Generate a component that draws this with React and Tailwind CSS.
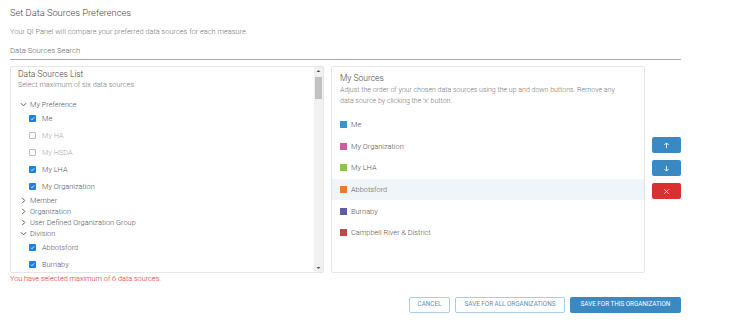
import React from "react";

const tree = [
  { type: "group", label: "My Preference", open: true },
  { type: "item", label: "Me", checked: true },
  { type: "item", label: "My HA", disabled: true },
  { type: "item", label: "My HSDA", disabled: true },
  { type: "item", label: "My LHA", checked: true },
  { type: "item", label: "My Organization", checked: true },
  { type: "group", label: "Member" },
  { type: "group", label: "Organization" },
  { type: "group", label: "User Defined Organization Group" },
  { type: "group", label: "Division", open: true },
  { type: "item", label: "Abbotsford", checked: true },
  { type: "item", label: "Burnaby", checked: true },
];

const sources = [
  { label: "Me", color: "bg-[#3d95c6]" },
  { label: "My Organization", color: "bg-[#c761a3]" },
  { label: "My LHA", color: "bg-[#8dc63f]" },
  { label: "Abbotsford", color: "bg-[#ec7a30]", active: true },
  { label: "Burnaby", color: "bg-[#5b5ea6]" },
  { label: "Campbell River & District", color: "bg-[#bb4a4d]" },
];

const Chevron = ({ open }) => (
  <svg width="7" height="7" viewBox="0 0 8 8" className="mr-[3px]">
    {open ? (
      <path d="M1 2.5 L4 5.5 L7 2.5" fill="none" stroke="#555" strokeWidth="1.1" />
    ) : (
      <path d="M2.5 1 L5.5 4 L2.5 7" fill="none" stroke="#555" strokeWidth="1.1" />
    )}
  </svg>
);

const Checkbox = ({ checked }) =>
  checked ? (
    <span className="w-[7px] h-[7px] bg-[#1e7fd8] rounded-[1px] flex items-center justify-center">
      <svg width="5" height="5" viewBox="0 0 6 6">
        <path d="M1 3.2 L2.4 4.6 L5 1.6" fill="none" stroke="#fff" strokeWidth="1" />
      </svg>
    </span>
  ) : (
    <span className="w-[7px] h-[7px] border border-[#bbb] rounded-[1px]" />
  );

export default function App() {
  return (
    <div
      className="w-[741px] h-[327px] bg-white text-[#666] font-light px-[10px] pt-[6px]"
      style={{ fontFamily: "Roboto, 'Liberation Sans', sans-serif" }}
    >
      <div className="w-[671px]">
        <h1 className="text-[9.3px] text-[#444] leading-[14px]">Set Data Sources Preferences</h1>
        <p className="text-[7.4px] text-[#777] mt-[7px] leading-[10px]">
          Your QI Panel will compare your preferred data sources for each measure.
        </p>
        <div className="text-[7.7px] text-[#666] mt-[9px] pb-[3px] border-b border-[#aaa] leading-[10px]">
          Data Sources Search
        </div>

        <div className="flex mt-[6px]">
          {/* data sources list */}
          <div className="w-[314px] shrink-0 h-[207px] border border-[#e6e6e6] rounded-[2px] flex overflow-hidden">
            <div className="flex-1 pl-[7px] pt-[2px] overflow-hidden">
              <div className="text-[8.5px] text-[#444] leading-[11px]">Data Sources List</div>
              <div className="text-[7.3px] text-[#777] leading-[10px]">Select maximum of six data sources.</div>
              <div className="mt-[9px]">
                {tree.map((n) =>
                  n.type === "group" ? (
                    <div key={n.label} className="flex items-center h-[11px] pl-[2px] text-[7.4px] text-[#555]">
                      <Chevron open={n.open} />
                      {n.label}
                    </div>
                  ) : (
                    <div
                      key={n.label}
                      className={`flex items-center gap-[6px] h-[17px] pl-[11px] text-[7.4px] ${
                        n.disabled ? "text-[#aaa]" : "text-[#555]"
                      }`}
                    >
                      <Checkbox checked={n.checked} />
                      {n.label}
                    </div>
                  )
                )}
              </div>
            </div>
            <div className="w-[9px] bg-[#f1f1f1] flex flex-col items-center">
              <svg width="5" height="8" viewBox="0 0 5 8">
                <path d="M0.5 5 L2.5 3 L4.5 5 Z" fill="#555" />
              </svg>
              <div className="w-[7px] h-[22px] bg-[#c1c1c1] mt-[2px]" />
              <div className="flex-1" />
              <svg width="5" height="8" viewBox="0 0 5 8">
                <path d="M0.5 3 L2.5 5 L4.5 3 Z" fill="#555" />
              </svg>
            </div>
          </div>

          {/* my sources */}
          <div className="w-[314px] shrink-0 h-[207px] border border-[#e6e6e6] rounded-[2px] ml-[7px] pt-[6px]">
            <div className="px-[8px]">
              <div className="text-[8.5px] text-[#444] leading-[11px]">My Sources</div>
              <div className="text-[7px] text-[#777] leading-[11px] mt-[1px] pr-[12px]">
                Adjust the order of your chosen data sources using the up and down buttons. Remove any data source by clicking the 'x' button.
              </div>
            </div>
            <div className="mt-[7px]">
              {sources.map((s) => (
                <div
                  key={s.label}
                  className={`flex items-center gap-[4px] h-[21.6px] px-[8px] text-[7.4px] text-[#555] ${
                    s.active ? "bg-[#eff5f9]" : ""
                  }`}
                >
                  <span className={`w-[7px] h-[7px] ${s.color}`} />
                  {s.label}
                </div>
              ))}
            </div>
          </div>

          {/* order buttons */}
          <div className="flex flex-col gap-[7px] ml-[7px] mt-[71px]">
            <button className="w-[29px] h-[16px] bg-[#3a89c3] rounded-[2px] flex items-center justify-center">
              <svg width="7" height="7" viewBox="0 0 8 8">
                <path d="M4 7 V1.2 M1.5 3.5 L4 1 L6.5 3.5" fill="none" stroke="#fff" strokeWidth="1" />
              </svg>
            </button>
            <button className="w-[29px] h-[16px] bg-[#3a89c3] rounded-[2px] flex items-center justify-center">
              <svg width="7" height="7" viewBox="0 0 8 8">
                <path d="M4 1 V6.8 M1.5 4.5 L4 7 L6.5 4.5" fill="none" stroke="#fff" strokeWidth="1" />
              </svg>
            </button>
            <button className="w-[29px] h-[16px] bg-[#d8312f] rounded-[2px] flex items-center justify-center">
              <svg width="7" height="7" viewBox="0 0 8 8">
                <path d="M1.5 1.5 L6.5 6.5 M6.5 1.5 L1.5 6.5" fill="none" stroke="#fff" strokeWidth="1" />
              </svg>
            </button>
          </div>
        </div>

        <div className="text-[7.3px] text-[#e8262b] mt-[1px] leading-[10px]">
          You have selected maximum of 6 data sources.
        </div>

        <div className="flex justify-end gap-[5px] mt-[13px]">
          <button className="w-[41px] h-[16px] border border-[#a9cde6] rounded-[2px] text-[6.3px] font-normal text-[#5b8fb8]">
            CANCEL
          </button>
          <button className="w-[110px] h-[16px] border border-[#a9cde6] rounded-[2px] text-[6.3px] font-normal text-[#5b8fb8]">
            SAVE FOR ALL ORGANIZATIONS
          </button>
          <button className="w-[111px] h-[16px] bg-[#3a89c3] rounded-[2px] text-[6.3px] font-normal text-white">
            SAVE FOR THIS ORGANIZATION
          </button>
        </div>
      </div>
    </div>
  );
}
